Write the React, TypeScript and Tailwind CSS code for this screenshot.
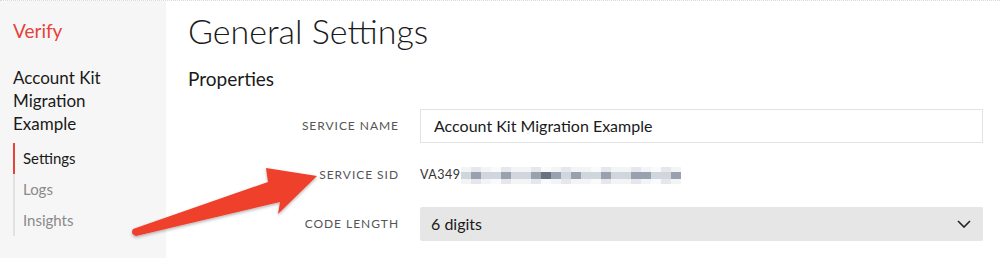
const navItems = [
  { label: "Settings", active: true },
  { label: "Logs", active: false },
  { label: "Insights", active: false },
];

const blurTop = ["bg-gray-100", "bg-gray-200", "bg-gray-100", "bg-gray-50", "bg-gray-200", "bg-gray-100", "bg-gray-100", "bg-gray-200", "bg-gray-50", "bg-gray-100", "bg-gray-200", "bg-gray-100", "bg-gray-100", "bg-gray-50", "bg-gray-200", "bg-gray-100", "bg-gray-100", "bg-gray-200", "bg-gray-100", "bg-gray-50", "bg-gray-200", "bg-gray-100"];
const blurMid = ["bg-gray-300", "bg-gray-400", "bg-gray-300", "bg-gray-300", "bg-gray-400", "bg-gray-300", "bg-gray-300", "bg-gray-400", "bg-gray-500", "bg-gray-400", "bg-gray-300", "bg-gray-400", "bg-gray-300", "bg-gray-300", "bg-gray-400", "bg-gray-300", "bg-gray-300", "bg-gray-400", "bg-gray-400", "bg-gray-300", "bg-gray-300", "bg-gray-400"];

function Sidebar() {
  return (
    <aside className="w-[166px] shrink-0 bg-[#f6f6f6] pl-[13px] pt-[17px]">
      <div className="text-[19px] leading-[26px] text-[#e5433b]">Verify</div>
      <div className="mt-[22px] text-[17px] leading-[23px] text-[#1a1a1a]">
        Account Kit
        <br />
        Migration
        <br />
        Example
      </div>
      <nav className="mt-[8px] flex flex-col border-l-2 border-[#e2e2e2]">
        {navItems.map((item) => (
          <a
            key={item.label}
            className={
              item.active
                ? "-ml-[2px] border-l-2 border-[#e5433b] py-[4px] pl-[8px] text-[15px] leading-[23px] text-[#1a1a1a]"
                : "py-[4px] pl-[8px] text-[15px] leading-[23px] text-[#8a8a8a]"
            }
          >
            {item.label}
          </a>
        ))}
      </nav>
    </aside>
  );
}

function Label({ children }: { children: string }) {
  return (
    <div className="w-[211px] shrink-0 text-right text-[12px] uppercase tracking-[0.08em] text-[#555]">
      {children}
    </div>
  );
}

function BlurredSid() {
  return (
    <div className="flex flex-col">
      <div className="flex h-[5px]">
        {blurTop.map((c, i) => (
          <div key={i} className={`h-full w-[10px] ${c}`} />
        ))}
      </div>
      <div className="flex h-[7px]">
        {blurMid.map((c, i) => (
          <div key={i} className={`h-full w-[10px] ${c}`} />
        ))}
      </div>
      <div className="flex h-[5px]">
        {blurTop.map((c, i) => (
          <div key={i} className={`h-full w-[10px] ${c}`} />
        ))}
      </div>
    </div>
  );
}

function Arrow() {
  return (
    <svg
      className="pointer-events-none absolute left-0 top-0"
      width="1000"
      height="258"
      viewBox="0 0 1000 258"
    >
      <defs>
        <filter id="sh" x="-10%" y="-10%" width="120%" height="130%">
          <feDropShadow dx="0" dy="1.5" stdDeviation="1.5" floodColor="#000" floodOpacity="0.3" />
        </filter>
      </defs>
      <path
        d="M133,228 L268,181 L266,167 L317,175 L278,213 L280,201 L136,235 Q130,233 133,228 Z"
        fill="#ee3f2b"
        filter="url(#sh)"
      />
    </svg>
  );
}

export default function App() {
  return (
    <div
      className="relative flex h-[258px] w-[1000px] overflow-hidden border-t border-dotted border-[#d8d8d8] bg-white"
      style={{ fontFamily: "Lato, 'Open Sans', sans-serif" }}
    >
      <Sidebar />
      <main className="flex-1 pl-[22px] pr-[17px]">
        <h1 className="mt-[10px] text-[34px] font-light leading-[40px] text-[#1a1a1a]">General Settings</h1>
        <h2 className="mt-[16px] text-[19px] leading-[24px] text-[#1a1a1a]">Properties</h2>
        <div className="mt-[18px] flex flex-col gap-[15px]">
          <div className="flex items-center gap-[21px]">
            <Label>Service Name</Label>
            <div className="flex h-[34px] flex-1 items-center border border-[#e3e3e3] px-[13px] text-[16px] text-[#1a1a1a]">
              Account Kit Migration Example
            </div>
          </div>
          <div className="flex h-[34px] items-center gap-[21px]">
            <Label>Service SID</Label>
            <div className="flex items-center">
              <span className="text-[12.5px] tracking-[0.04em] text-[#333]">VA349</span>
              <BlurredSid />
            </div>
          </div>
          <div className="flex items-center gap-[21px]">
            <Label>Code Length</Label>
            <div className="flex h-[34px] flex-1 items-center justify-between rounded-[2px] bg-[#e6e6e6] pl-[11px] pr-[12px] text-[16px] text-[#1a1a1a]">
              <span>6 digits</span>
              <svg width="14" height="8" viewBox="0 0 14 8" fill="none" stroke="#222" strokeWidth="1.6">
                <path d="M1 1 L7 7 L13 1" />
              </svg>
            </div>
          </div>
        </div>
      </main>
      <Arrow />
    </div>
  );
}
